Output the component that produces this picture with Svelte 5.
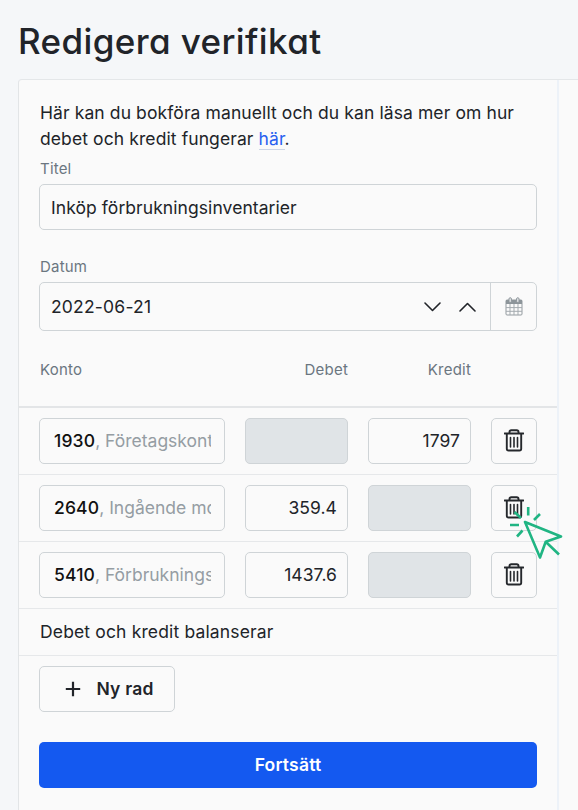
<script>
  let title = "Inköp förbrukningsinventarier";
  let date = "2022-06-21";

  let rows = [
    { account: "1930", name: "Företagskonto", debet: "", kredit: "1797" },
    { account: "2640", name: "Ingående moms", debet: "359.4", kredit: "" },
    { account: "5410", name: "Förbrukningsinventarier", debet: "1437.6", kredit: "" },
  ];
</script>

<div class="page">
  <h1>Redigera verifikat</h1>

  <div class="card">
    <div class="panel">
      <div class="form">
        <p class="intro">
          Här kan du bokföra manuellt och du kan läsa mer om hur<br />debet och kredit fungerar
          <span class="link">här</span>.
        </p>

        <div class="label title-label">Titel</div>
        <div class="box title-box">{title}</div>

        <div class="label date-label">Datum</div>
        <div class="box date-box">
          <span class="date">{date}</span>
          <svg class="arrow" width="17" height="10" viewBox="0 0 17 10">
            <path d="M1 1 8.5 8.5 16 1" />
          </svg>
          <svg class="arrow" width="17" height="10" viewBox="0 0 17 10">
            <path d="M1 9 8.5 1.5 16 9" />
          </svg>
          <div class="calendar">
            <svg width="18" height="19" viewBox="0 0 18 19">
              <rect x="1" y="3" width="16" height="15" rx="1" fill="none" stroke="#939a9f" />
              <path d="M1 3h16v4H1z" fill="#8d959a" />
              <path d="M1 10.6h16M1 14.3h16M5 7v11M9 7v11M13 7v11" fill="none" stroke="#a4abaf" />
              <rect x="4" y=".7" width="2.4" height="4.8" rx="1.2" fill="#e4e6e8" stroke="#8d959a" />
              <rect x="11.6" y=".7" width="2.4" height="4.8" rx="1.2" fill="#e4e6e8" stroke="#8d959a" />
            </svg>
          </div>
        </div>
      </div>

      <div class="grid head label">
        <span>Konto</span>
        <span class="right">Debet</span>
        <span class="right">Kredit</span>
      </div>

      {#each rows as row, i}
        <div class="grid row">
          <div class="box account">
            <div class="clip"><b>{row.account}</b>, {row.name}</div>
          </div>
          <div class="box amount" class:disabled={!row.debet}>{row.debet}</div>
          <div class="box amount" class:disabled={!row.kredit}>{row.kredit}</div>
          <div class="box trash">
            <svg width="20" height="23" viewBox="0 0 20 23">
              <path d="M.5 4.5h19M5.5 4V3q0-1.8 1.8-1.8h5.4q1.8 0 1.8 1.8v1M2.8 4.5v15.2q0 1.8 1.8 1.8h10.8q1.8 0 1.8-1.8V4.5" stroke-width="1.9" />
              <path d="M6.5 8.5v9.5M10 8.5v9.5M13.5 8.5v9.5" stroke-width="1.6" />
            </svg>
            {#if i === 1}
              <svg class="pointer" width="56" height="56" viewBox="0 0 56 56">
                <path d="m18 18 36 14.5-15.3 5.2L33 53.5zM38.7 37.7 52 50.5M21.2 3v8.5M33 10 27 16M7.5 8l6.5 6M3 21h9M10 32.5l5.5-6" />
              </svg>
            {/if}
          </div>
        </div>
      {/each}

      <div class="balance">Debet och kredit balanserar</div>

      <div class="actions">
        <button class="add">
          <svg width="16" height="16" viewBox="0 0 16 16">
            <path d="M8 .8v14.4M.8 8h14.4" />
          </svg>
          Ny rad
        </button>
        <button class="submit">Fortsätt</button>
      </div>
    </div>
  </div>
</div>

<style>
  :global(body) {
    background: #f5f7f9;
  }

  .page {
    box-sizing: border-box;
    height: 810px;
    overflow: hidden;
    padding-left: 18px;
    color: #212429;
    font-family: Inter, "Liberation Sans", sans-serif;
    font-size: 17.5px;
    letter-spacing: 0.07px;
  }

  h1 {
    box-sizing: border-box;
    height: 79px;
    margin: 0;
    padding-top: 18px;
    font-size: 35px;
    font-weight: 500;
    line-height: 46px;
    letter-spacing: 0.38px;
    white-space: nowrap;
    font-feature-settings: "cv11";
  }

  .card {
    box-sizing: border-box;
    height: 740px;
    border-top: 1px solid #e4e7e9;
    border-left: 1px solid #e2e5e7;
    border-top-left-radius: 4px;
    background: #fafafa;
  }

  .panel {
    box-sizing: border-box;
    width: 540px;
    height: 100%;
    border-right: 2px solid #edf2f8;
  }

  .form {
    padding: 20px 20px 0 20px;
  }

  .intro {
    margin: 0;
    height: 51px;
    padding-left: 1px;
    line-height: 25.5px;
    letter-spacing: 0.1px;
    white-space: nowrap;
  }

  .link {
    color: #2860f0;
    border-bottom: 1px solid #cdd6e6;
  }

  .label {
    color: #6b7680;
    font-size: 15px;
    line-height: 20px;
    letter-spacing: 0.2px;
  }

  .title-label {
    margin-top: 8px;
    padding-left: 1px;
  }

  .box {
    box-sizing: border-box;
    display: flex;
    align-items: center;
    height: 46px;
    border: 1px solid #cfd4d7;
    border-radius: 5px;
    white-space: nowrap;
  }

  .title-box {
    margin-top: 5px;
    padding-left: 11px;
  }

  .date-label {
    margin-top: 27px;
    padding-left: 1px;
  }

  .date-box {
    height: 49px;
    margin-top: 5px;
    padding-left: 11px;
    gap: 18px;
  }

  .date {
    flex: 1;
    letter-spacing: 0.2px;
  }

  .arrow path {
    fill: none;
    stroke: #212429;
    stroke-width: 1.6;
    stroke-linecap: round;
    stroke-linejoin: round;
  }

  .calendar {
    display: flex;
    align-items: center;
    justify-content: center;
    width: 45px;
    height: 47px;
    margin-left: -4px;
    border-left: 1px solid #cfd4d7;
  }

  .grid {
    display: grid;
    grid-template-columns: 186px 103px 103px 46px;
    column-gap: 20px;
    box-sizing: border-box;
    padding-left: 20px;
    border-bottom: 1px solid #e6e8ea;
  }

  .head {
    height: 77px;
    padding-top: 29px;
    border-bottom: 2px solid #e3e5e7;
  }

  .head span:first-child {
    padding-left: 1px;
  }

  .right {
    text-align: right;
  }

  .row {
    align-items: center;
    height: 67px;
  }

  .account {
    padding: 0 13px 2px 14px;
    color: #959da3;
  }

  .clip {
    width: 100%;
    overflow: hidden;
    letter-spacing: 0;
  }

  .clip b {
    color: #111;
    font-weight: 500;
    letter-spacing: 0.15px;
  }

  .amount {
    justify-content: flex-end;
    padding: 0 10px 1px 0;
  }

  .disabled {
    background: #e0e4e7;
  }

  .trash {
    position: relative;
    justify-content: center;
    padding-bottom: 2px;
  }

  .trash svg {
    fill: none;
    stroke: #25282c;
    stroke-linecap: round;
  }

  .trash .pointer {
    position: absolute;
    left: 15px;
    top: 18px;
    stroke: #20b583;
    stroke-width: 2.6;
    stroke-linecap: butt;
    stroke-linejoin: round;
  }

  .balance {
    box-sizing: border-box;
    height: 47px;
    padding-left: 21px;
    border-bottom: 1px solid #e6e8ea;
    line-height: 46px;
    letter-spacing: 0.15px;
  }

  .actions {
    display: flex;
    flex-direction: column;
    align-items: flex-start;
    gap: 30px;
    padding: 10px 20px 0 20px;
  }

  button {
    display: flex;
    align-items: center;
    justify-content: center;
    height: 46px;
    padding: 0 0 1px;
    border-radius: 5px;
    font: inherit;
    font-weight: 600;
    letter-spacing: 0.2px;
  }

  .add {
    width: 136px;
    padding-left: 5px;
    gap: 15px;
    border: 1px solid #cfd4d7;
    background: none;
    color: #212429;
  }

  .add path {
    stroke: #212429;
    stroke-width: 2.2;
  }

  .submit {
    width: 100%;
    border: none;
    background: #1459f0;
    color: #fff;
  }
</style>
